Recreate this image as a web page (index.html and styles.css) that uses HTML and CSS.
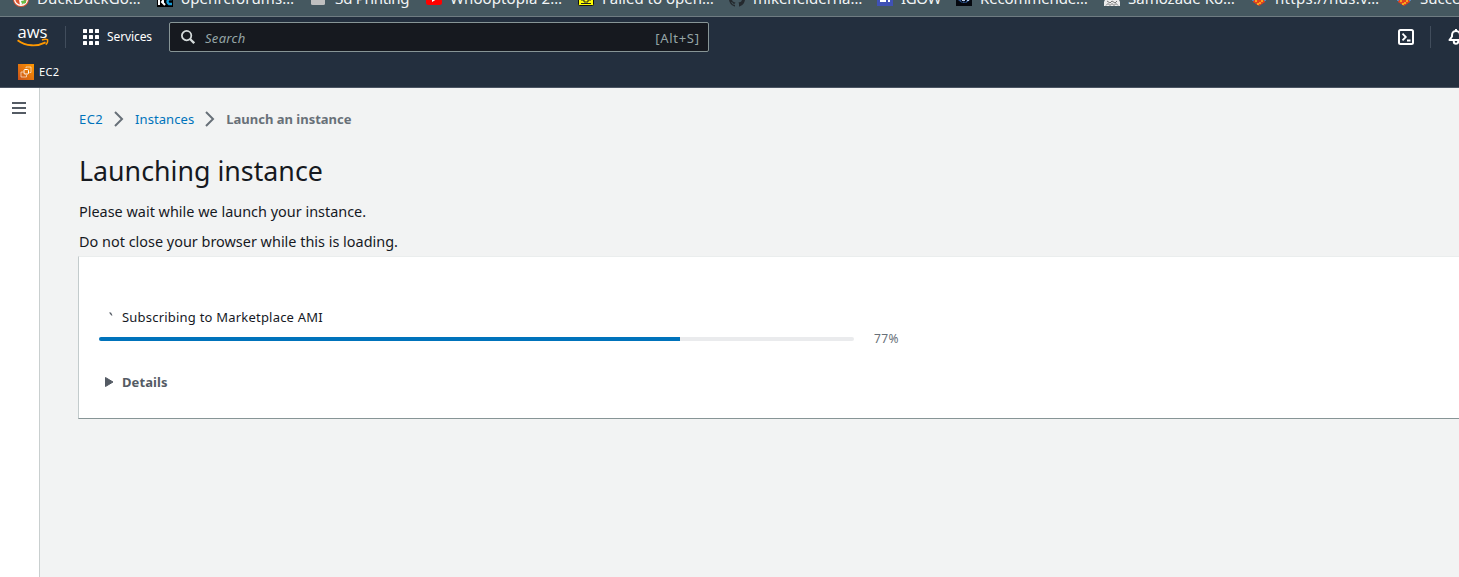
FILE: index.html
```html
<!DOCTYPE html>
<html lang="en">
<head>
<meta charset="utf-8">
<title>Launch an instance | EC2</title>
<link rel="stylesheet" href="styles.css">
</head>
<body>
<div class="bookmarks">
  <span class="bookmark w144"><svg class="fav" viewBox="0 0 16 16"><circle cx="8" cy="8" r="8" fill="#de5833"/><circle cx="8" cy="8" r="6.4" fill="none" stroke="#fff" stroke-width="1.3"/><path d="M5 3h4l2 5v5l-4 1z" fill="#fff"/><path d="M8 10l5-1v3l-4 1z" fill="#65bc46"/></svg><span class="wider">DuckDuckGo…</span></span>
  <span class="bookmark w154"><svg class="fav" viewBox="0 0 16 16"><path fill="#000" d="M0 0h16v16H0z"/><path d="M2 14V7h3q2 2 0 4l3 3M5 11h2" fill="none" stroke="#fff" stroke-width="2"/><path d="M15 8h-3q-3 3 0 5h3" fill="none" stroke="#159bd7" stroke-width="2.4"/></svg><span class="wider">openrcforums…</span></span>
  <span class="bookmark w115"><svg class="fav" viewBox="0 0 16 16"><rect x="0" y="2" width="14" height="12" rx="1.5" fill="#bfbfbf"/></svg><span class="tight">3d Printing</span></span>
  <span class="bookmark w152"><svg class="fav" viewBox="0 0 16 16"><rect y="2" width="16" height="12" rx="2.5" fill="#f00"/><path d="M6 5l5 3-5 3z" fill="#fff"/></svg><span class="wider">Whooptopia 2…</span></span>
  <span class="bookmark w151"><svg class="fav" viewBox="0 0 16 16"><rect x=".5" y=".5" width="15" height="14" rx="1" fill="#ff0" stroke="#111"/><path d="M3 9h3v2h4V9h3M3 12.500h10" fill="none" stroke="#222"/></svg><span>Failed to open…</span></span>
  <span class="bookmark w148"><svg class="fav" viewBox="0 0 16 16"><path fill="#24292e" d="M8 0a8 8 0 00-2.500 15.600c.4.100.5-.2.500-.4v-1.500C3.800 14.200 3.300 12.800 3.300 12.800c-.4-.9-.9-1.200-.9-1.200-.7-.5.100-.5.100-.5.800.1 1.200.8 1.200.8.700 1.300 1.900.9 2.300.7.100-.5.300-.9.500-1.100C4.700 11.300 2.900 10.600 2.900 7.600c0-.9.300-1.600.8-2.200-.1-.2-.4-1 .1-2.100 0 0 .7-.2 2.200.8a7.700 7.700 0 014 0c1.500-1 2.200-.8 2.200-.8.500 1.100.2 1.900.1 2.100.5.600.8 1.300.8 2.200 0 3.100-1.900 3.700-3.700 3.900.3.300.6.800.6 1.600v2.100c0 .2.100.5.500.4A8 8 0 008 0z"/></svg><span>mikeheiderha…</span></span>
  <span class="bookmark w79"><svg class="fav" viewBox="0 0 16 16"><path fill="#3f51b5" d="M0 0h16v15H0z"/><path fill="#fff" d="M3 5h6v6H3zM11 7h2v4h-2z"/></svg><span class="tight">IGOW</span></span>
  <span class="bookmark w148"><svg class="fav" viewBox="0 0 16 16"><path fill="#05080f" d="M0 0h16v15H0z"/><path fill="#2f5794" d="M2 9h3l1 3 2-2 1 2 2-3h3l-4 3H6z"/><path fill="#b9cdea" d="M6 8h3v2H6zM11 9h2v1h-2z"/></svg><span class="snug">Recommende…</span></span>
  <span class="bookmark w147"><svg class="fav" viewBox="0 0 16 16"><path d="M0 15V11l3-7h10l3 7v4z" fill="#ececec"/><path d="M2 14.500l2-2 2 2 2-2 2 2 2-2 2 2M3 10l3 2 2-2 3 2 2-2" fill="none" stroke="#777"/></svg><span>Samozade Ko…</span></span>
  <span class="bookmark w145"><svg class="fav" viewBox="0 0 16 16"><path d="M2 8h12v3l-6 4-6-4z" fill="#e3401f"/><path d="M4 9h2v2H4zM8 11h2v2H8zM10 9h2v2h-2zM6 12h2v2H6z" fill="#f7a51b"/><path d="M1 8h2v2H1zM13 8h2v2h-2z" fill="#5886b8"/></svg><span class="url">https://hds.v…</span></span>
  <span class="bookmark"><svg class="fav" viewBox="0 0 16 16"><path d="M2 8h12v3l-6 4-6-4z" fill="#e3401f"/><path d="M4 9h2v2H4zM8 11h2v2H8zM10 9h2v2h-2zM6 12h2v2H6z" fill="#f7a51b"/><path d="M1 8h2v2H1zM13 8h2v2h-2z" fill="#5886b8"/></svg><span>Succes</span></span>
</div>

<header class="console-header">
  <div class="nav-row">
    <svg class="aws-logo" width="32" height="24" viewBox="0 0 32 24"><text class="aws-text" x="0.500" y="13" textLength="30" lengthAdjust="spacingAndGlyphs">aws</text><path d="M.6 15.200C9 21.500 20 21.800 28.600 17.400" fill="none" stroke="#f90" stroke-width="1.900"/><path d="M25 15c2-.9 4.300-.9 5.600-.3.300 1.700-.4 4-1.800 5" fill="none" stroke="#f90" stroke-width="1.400"/></svg>
    <span class="divider"></span>
    <svg class="grid-icon" width="16" height="16" viewBox="0 0 16 16" fill="#fff"><rect width="4" height="4" rx=".6"/><rect x="6" width="4" height="4" rx=".6"/><rect x="12" width="4" height="4" rx=".6"/><rect y="6" width="4" height="4" rx=".6"/><rect x="6" y="6" width="4" height="4" rx=".6"/><rect x="12" y="6" width="4" height="4" rx=".6"/><rect y="12" width="4" height="4" rx=".6"/><rect x="6" y="12" width="4" height="4" rx=".6"/><rect x="12" y="12" width="4" height="4" rx=".6"/></svg>
    <span class="services">Services</span>
    <div class="search">
      <svg width="14" height="14" viewBox="0 0 14 14" fill="none" stroke="#d5dbdb"><circle cx="5.600" cy="5.600" r="4.700" stroke-width="1.800"/><path d="M9 9l4.200 4.200" stroke-width="2.300"/></svg>
      <span class="placeholder">Search</span>
      <span class="shortcut">[Alt+S]</span>
    </div>
    <div class="nav-right">
      <svg width="16" height="16" viewBox="0 0 16 16" fill="none" stroke="#fff" stroke-width="2"><rect x="1" y="1" width="14" height="14" rx="1.500"/><path d="M4.500 4.600L7.800 8l-3.300 3.400M9 11.500h3.500" stroke-width="1.800"/></svg>
      <span class="divider"></span>
      <svg class="bell" width="16" height="16" viewBox="0 0 16 16" fill="none" stroke="#fff" stroke-width="2"><path d="M1.500 11h13L12 7.500V6.200C12 3.500 10 2 8 2S4 3.500 4 6.200v1.300zM8 0v2" stroke-linejoin="round"/><path d="M5.800 11.500v1a2.200 2.200 0 004.400 0v-1"/></svg>
    </div>
  </div>
  <div class="favorites">
    <svg width="16" height="16" viewBox="0 0 16 16"><defs><linearGradient id="o" x1="0" y1="1" x2="1" y2="0"><stop stop-color="#c8511b"/><stop offset="1" stop-color="#f90"/></linearGradient></defs><path fill="url(#o)" d="M0 0h16v16H0z"/><g fill="none" stroke="#fff"><rect x="6" y="5.500" width="4.500" height="4.500" rx="1" stroke-width="1"/><path d="M5 8H3v5h5.500v-2M8 4.200V3h5v5.500h-1.500" stroke-width=".6"/></g></svg>
    <span class="fav-label">EC2</span>
  </div>
</header>

<div class="shell">
  <aside class="rail"><svg width="14" height="12" viewBox="0 0 14 12" fill="#545b64"><path d="M0 0h14v2H0zM0 5h14v2H0zM0 10h14v2H0z"/></svg></aside>
  <main class="content">
    <nav class="crumbs">
      <a class="crumb-root">EC2</a>
      <svg width="10" height="16" viewBox="0 0 10 16"><path d="M1 1l7 7-7 7" fill="none" stroke="#687078" stroke-width="2"/></svg>
      <a class="crumb-link">Instances</a>
      <svg width="10" height="16" viewBox="0 0 10 16"><path d="M1 1l7 7-7 7" fill="none" stroke="#687078" stroke-width="2"/></svg>
      <b>Launch an instance</b>
    </nav>
    <h1><span class="narrow">Launching instance</span></h1>
    <p><span class="narrow">Please wait while we launch your instance.</span></p>
    <p><span class="narrow">Do not close your browser while this is loading.</span></p>
    <section class="card">
      <div class="status"><svg class="spin" width="4" height="5" viewBox="0 0 4 5"><path d="M0 .5h2l1.500 3H2.300z" fill="#545b64"/></svg><span class="task">Subscribing to Marketplace AMI</span></div>
      <div class="progress"><div class="track"><div class="fill" style="width:77%"></div></div><span class="percent">77%</span></div>
      <div class="details"><svg width="9" height="10" viewBox="0 0 9 10"><path d="M.5.500L8 5 .5 9.500z" fill="#545b64" stroke="#545b64" stroke-linejoin="round"/></svg><b>Details</b></div>
    </section>
  </main>
</div>
</body>
</html>
```
FILE: styles.css
```css
* { box-sizing: border-box; }
body { margin: 0; height: 577px; overflow: hidden; display: flex; flex-direction: column; font-family: "Noto Sans", sans-serif; font-size: 13px; color: #16191f; background: #f2f3f3; }
svg { flex: none; display: block; }
.bookmarks { height: 17px; flex: none; display: flex; padding-left: 13px; overflow: hidden; background: #455860; border-bottom: 1px solid #6f7c82; }
.bookmark { height: 20px; margin-top: -12px; flex: none; display: flex; align-items: center; gap: 8px; line-height: 20px; font-size: 15px; color: #f2f5f6; white-space: nowrap; }
.fav { width: 16px; height: 16px; margin-top: 2px; }
.w144 { width: 144px; } .w154 { width: 154px; } .w115 { width: 115px; } .w152 { width: 152px; }
.w151 { width: 151px; } .w148 { width: 148px; } .w79 { width: 79px; } .w147 { width: 147px; } .w145 { width: 145px; }
.wider { letter-spacing: .1px; }
.tight { letter-spacing: -.35px; }
.snug { letter-spacing: -.15px; }
.url { letter-spacing: .3px; }

.console-header { flex: none; height: 71px; background: #232f3e; border-bottom: 1px solid #4b5563; }
.nav-row { height: 40px; display: flex; align-items: center; padding-left: 17px; }
.aws-logo { margin-top: 0; }
.aws-text { font: 500 17px "Open Sans", sans-serif; fill: #fff; }
.divider { flex: none; width: 1px; height: 22px; background: #414d5c; margin-left: 16px; }
.grid-icon { margin-left: 17px; }
.services { flex: none; margin: -1px 0 0 8px; width: 62px; color: #fff; font-size: 12px; letter-spacing: -.1px; white-space: nowrap; }
.search { flex: none; width: 540px; height: 30px; display: flex; align-items: center; margin-left: 0; padding: 0 9px 0 11px; border: 1px solid #879596; border-radius: 2px; background: #16191f; color: #95a5a6; }
.placeholder { margin: 1px 0 0 10px; font-style: italic; letter-spacing: .3px; }
.shortcut { margin: 1px 0 0 auto; letter-spacing: .7px; margin-right: -.7px; }
.nav-right { flex: none; display: flex; align-items: center; margin-left: 689px; }
.bell { margin-left: 17px; }
.favorites { display: flex; align-items: center; height: 30px; padding-left: 18px; gap: 5px; color: #fff; font-size: 11px; }
.fav-label { margin-top: -2px; letter-spacing: .4px; }

.shell { flex: 1; display: flex; min-height: 0; }
.rail { width: 40px; flex: none; padding: 14px 0 0 12px; background: #fff; border-right: 1px solid #c9cfcf; }
.content { flex: 1; min-width: 0; padding: 20px 0 0 38px; }
.crumbs { display: flex; align-items: center; height: 22px; padding-left: 1px; color: #0073bb; white-space: nowrap; }
.crumbs svg { margin: 0 11px; }
.crumbs b { color: #687078; }
.crumb-root { letter-spacing: .4px; }
.crumb-link { letter-spacing: .07px; }
h1 { margin: 22px 0 0 1px; font-size: 28px; line-height: 36px; font-weight: 400; }
p { margin: 12px 0 0 1px; font-size: 15px; line-height: 22px; height: 22px; }
p + p { margin-top: 8px; }
/* Condensed text widths for the heading and lead copy */
.narrow { display: inline-block; transform: scaleX(.962); transform-origin: left; }
h1 .narrow { transform: scaleX(.956); }
.card { margin-top: 4px; height: 163px; padding: 50px 0 0 20px; background: #fff; border: 1px solid #eaeded; border-left-color: #c3cbcc; border-bottom-color: #879596; border-right: 0; }
.status { display: flex; align-items: center; height: 20px; padding-left: 10px; }
.spin { margin-top: -5px; width: 4px; }
.task { margin-left: 9px; letter-spacing: .21px; }
.progress { display: flex; align-items: center; height: 22px; margin-top: 1px; gap: 20px; }
.track { width: 755px; height: 4px; border-radius: 2px; overflow: hidden; background: #eaebed; }
.fill { height: 4px; background: #0073bb; }
.percent { margin-top: -2px; font-size: 12px; letter-spacing: .4px; color: #687078; }
.details { display: flex; align-items: center; height: 22px; margin: 21px 0 0 6px; gap: 8px; color: #545b64; letter-spacing: .1px; }
```
